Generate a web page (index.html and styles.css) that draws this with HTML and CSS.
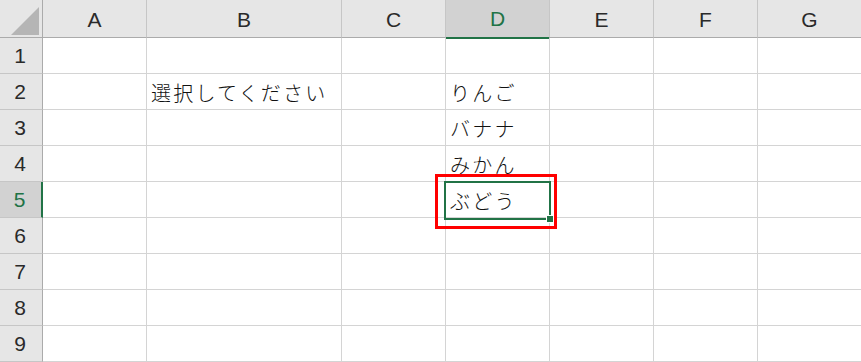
FILE: index.html
```html
<!DOCTYPE html>
<html lang="ja">
<head>
    <meta charset="UTF-8">
    <title>Sheet1</title>
    <link rel="stylesheet" href="styles.css">
</head>
<body>
    <div class="sheet">
        <div class="grid">
            <div class="corner"><span class="corner-mark"></span></div>
            <div class="col-head">A</div>
            <div class="col-head">B</div>
            <div class="col-head">C</div>
            <div class="col-head active">D</div>
            <div class="col-head">E</div>
            <div class="col-head">F</div>
            <div class="col-head">G</div>

            <div class="row-head">1</div>
            <div class="cell"></div><div class="cell"></div><div class="cell"></div><div class="cell"></div><div class="cell"></div><div class="cell"></div><div class="cell"></div>

            <div class="row-head">2</div>
            <div class="cell"></div><div class="cell">選択してください</div><div class="cell"></div><div class="cell">りんご</div><div class="cell"></div><div class="cell"></div><div class="cell"></div>

            <div class="row-head">3</div>
            <div class="cell"></div><div class="cell"></div><div class="cell"></div><div class="cell">バナナ</div><div class="cell"></div><div class="cell"></div><div class="cell"></div>

            <div class="row-head">4</div>
            <div class="cell"></div><div class="cell"></div><div class="cell"></div><div class="cell">みかん</div><div class="cell"></div><div class="cell"></div><div class="cell"></div>

            <div class="row-head active">5</div>
            <div class="cell"></div><div class="cell"></div><div class="cell"></div><div class="cell">ぶどう</div><div class="cell"></div><div class="cell"></div><div class="cell"></div>

            <div class="row-head">6</div>
            <div class="cell"></div><div class="cell"></div><div class="cell"></div><div class="cell"></div><div class="cell"></div><div class="cell"></div><div class="cell"></div>

            <div class="row-head">7</div>
            <div class="cell"></div><div class="cell"></div><div class="cell"></div><div class="cell"></div><div class="cell"></div><div class="cell"></div><div class="cell"></div>

            <div class="row-head">8</div>
            <div class="cell"></div><div class="cell"></div><div class="cell"></div><div class="cell"></div><div class="cell"></div><div class="cell"></div><div class="cell"></div>

            <div class="row-head">9</div>
            <div class="cell"></div><div class="cell"></div><div class="cell"></div><div class="cell"></div><div class="cell"></div><div class="cell"></div><div class="cell"></div>
        </div>

        <!-- active cell D5 and the highlight drawn round it -->
        <div class="selection"><span class="fill-handle"></span></div>
        <div class="highlight"></div>
    </div>
</body>
</html>
```

FILE: styles.css
```css
* {
    box-sizing: border-box;
}
body {
    margin: 0;
    background: #fff;
    overflow: hidden;
}
.sheet {
    position: relative;
    width: 861px;
    height: 362px;
    overflow: hidden;
}
.grid {
    display: grid;
    grid-template-columns: 43px 104px 195px 104px 104px 104px 104px 104px;
    grid-template-rows: 38px repeat(9, 36px);
    font-family: "Noto Sans CJK JP", sans-serif;
}
.corner {
    position: relative;
    background: #e6e6e6;
    border-right: 1px solid #ababab;
    border-bottom: 1px solid #ababab;
}
.corner-mark {
    position: absolute;
    left: 11px;
    top: 7px;
    width: 28px;
    height: 28px;
    background: #b5b5b5;
    clip-path: polygon(100% 0, 100% 100%, 0 100%);
}
.col-head {
    display: flex;
    align-items: center;
    justify-content: center;
    padding-top: 2px;
    background: #e6e6e6;
    border-right: 1px solid #c6c6c6;
    border-bottom: 1px solid #ababab;
    font-family: "Liberation Sans", Arial, sans-serif;
    font-size: 21px;
    color: #2a2a2a;
}
.col-head.active {
    background: #d2d2d2;
    color: #217346;
    border-bottom: 2px solid #217346;
    margin-bottom: -1px;
    padding-top: 1px;
}
.row-head {
    display: flex;
    align-items: center;
    justify-content: center;
    padding-right: 2px;
    background: #e6e6e6;
    border-right: 1px solid #ababab;
    border-bottom: 1px solid #c6c6c6;
    font-family: "Liberation Sans", Arial, sans-serif;
    font-size: 21px;
    color: #2a2a2a;
}
.row-head.active {
    background: #d2d2d2;
    color: #217346;
    border-right: 2px solid #217346;
}
.cell {
    display: flex;
    align-items: center;
    padding: 1px 0 0 4px;
    border-right: 1px solid #d4d4d4;
    border-bottom: 1px solid #d4d4d4;
    font-size: 20px;
    font-weight: 300;
    letter-spacing: 2.2px;
    color: #111;
    white-space: nowrap;
}
.selection {
    position: absolute;
    left: 444px;
    top: 181px;
    width: 107px;
    height: 39px;
    border: 2px solid #217346;
}
.fill-handle {
    position: absolute;
    right: -4px;
    bottom: -4px;
    width: 6px;
    height: 6px;
    background: #217346;
    outline: 1px solid #fff;
}
.highlight {
    position: absolute;
    left: 435px;
    top: 174px;
    width: 122px;
    height: 55px;
    border: 3px solid #ff0000;
}
```
